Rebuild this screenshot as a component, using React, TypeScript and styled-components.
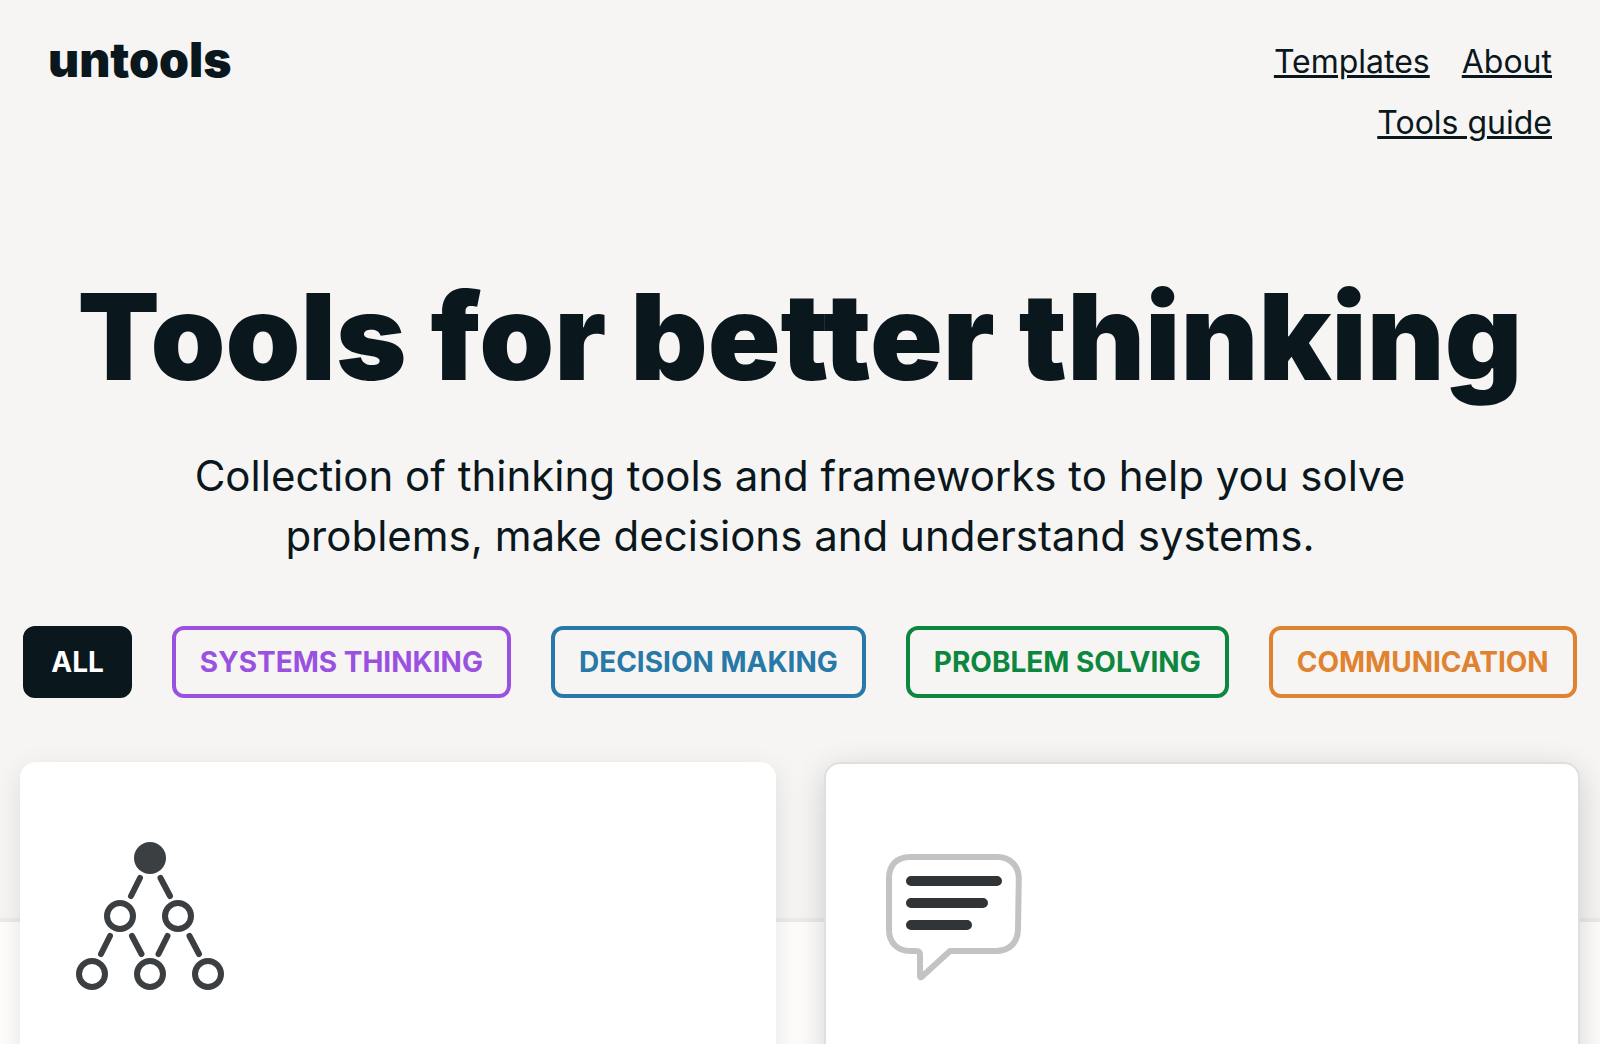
import React, { useState } from "react";
import styled, { createGlobalStyle } from "styled-components";

const ink = "#0a171c";

const GlobalStyle = createGlobalStyle`
  *, *::before, *::after { box-sizing: border-box; }
  body {
    margin: 0;
    background: #fefdfb;
    color: ${ink};
    font-family: Inter, "Liberation Sans", sans-serif;
  }
`;

const Page = styled.div`
  height: 100vh;
  overflow: hidden;
`;

const Hero = styled.div`
  background: #f7f5f3;
  border-bottom: 4px solid #ecebe9;
  padding-bottom: 220px;
`;

const Header = styled.header`
  display: flex;
  justify-content: space-between;
  align-items: flex-start;
  padding: 31px 48px 0;
`;

const Logo = styled.a`
  color: inherit;
  font-size: 48px;
  line-height: 58px;
  font-weight: 900;
  text-decoration: none;
`;

const Nav = styled.nav`
  display: flex;
  flex-wrap: wrap;
  justify-content: flex-end;
  gap: 16px 32px;
  max-width: 400px;
  padding-top: 8px;
`;

const NavLink = styled.a`
  color: inherit;
  font-size: 32px;
  line-height: 45px;
  text-decoration-thickness: 3px;
`;

const Intro = styled.section`
  padding: 120px 48px 0;
  text-align: center;
`;

const Title = styled.h1`
  margin: 0;
  font-size: 120px;
  line-height: 144px;
  font-weight: 900;
  white-space: nowrap;
`;

const Lead = styled.p`
  margin: 37px auto 0;
  max-width: 1280px;
  font-size: 42px;
  line-height: 60px;
`;

const Filters = styled.div`
  display: flex;
  justify-content: center;
  gap: 40px;
  padding-top: 60px;
`;

const FilterButton = styled.button<{ $color: string; $active: boolean }>`
  padding: 12px 24px;
  border: 4px solid ${(p) => p.$color};
  border-radius: 12px;
  background: ${(p) => (p.$active ? p.$color : "transparent")};
  color: ${(p) => (p.$active ? "#fff" : p.$color)};
  font: 700 28px/40px Inter, "Liberation Sans", sans-serif;
  text-transform: uppercase;
  white-space: nowrap;
  cursor: pointer;
`;

const Cards = styled.main`
  position: relative;
  display: grid;
  grid-template-columns: 1fr 1fr;
  gap: 48px;
  margin-top: -160px;
  padding: 0 20px;
`;

const Card = styled.article<{ $outlined?: boolean }>`
  min-height: 480px;
  padding: 78px 54px;
  border: 2px solid ${(p) => (p.$outlined ? "#dfdfdf" : "transparent")};
  border-radius: 16px;
  background: ${(p) => (p.$outlined ? "#fff" : "rgba(255, 255, 255, 0.95)")} border-box;
  box-shadow: 0 8px ${(p) => (p.$outlined ? "32px rgba(0, 0, 0, 0.16)" : "28px rgba(0, 0, 0, 0.1)")};
`;

const Icon = styled.svg`
  display: block;
  width: 148px;
  height: 148px;
  fill: none;
  stroke-width: 6px;
  stroke-linecap: round;
  stroke-linejoin: round;
`;

const TextBars = styled.path`
  stroke: #303437;
  stroke-width: 10px;
`;

const filters = [
  { label: "All", color: ink },
  { label: "Systems thinking", color: "#9b51e0" },
  { label: "Decision making", color: "#2779a7" },
  { label: "Problem solving", color: "#0c873e" },
  { label: "Communication", color: "#e08330" },
];

const PyramidIcon = () => (
  <Icon viewBox="0 0 148 148" stroke="#3c3f42" aria-hidden="true">
    <circle cx="74" cy="16" r="16" fill="#3c3f42" stroke="none" />
    <circle cx="44" cy="74" r="13" />
    <circle cx="102" cy="74" r="13" />
    <circle cx="16" cy="132" r="13" />
    <circle cx="74" cy="132" r="13" />
    <circle cx="132" cy="132" r="13" />
    <path d="M64 36l-9 18M84.500 36l9.500 18M34 94l-9 18M56 94l9.500 18M91.500 94l-9 18M113.500 94l9.500 18" />
  </Icon>
);

const SpeechIcon = () => (
  <Icon viewBox="0 0 148 148" aria-hidden="true">
    <path
      stroke="#c3c3c3"
      d="M30 15H117.500C130 15 139 24 138.800 37L138 87C137.800 101 129 109 116 109H70L41.500 135Q40 136 40 134V113Q40 109 36 109H30C17 109 9 100 9 88V36C9 23 17 15 30 15Z"
    />
    <TextBars d="M31 39H117M31 61H103M31 83H87" />
  </Icon>
);

export default function App() {
  const [active, setActive] = useState("All");
  return (
    <Page>
      <GlobalStyle />
      <Hero>
        <Header>
          <Logo href="#">untools</Logo>
          <Nav>
            <NavLink href="#templates">Templates</NavLink>
            <NavLink href="#about">About</NavLink>
            <NavLink href="#guide">Tools guide</NavLink>
          </Nav>
        </Header>
        <Intro>
          <Title>Tools for better thinking</Title>
          <Lead>
            Collection of thinking tools and frameworks to help you solve problems, make decisions and
            understand systems.
          </Lead>
        </Intro>
        <Filters>
          {filters.map((f) => (
            <FilterButton
              key={f.label}
              type="button"
              $color={f.color}
              $active={active === f.label}
              aria-pressed={active === f.label}
              onClick={() => setActive(f.label)}
            >
              {f.label}
            </FilterButton>
          ))}
        </Filters>
      </Hero>
      <Cards>
        <Card>
          <PyramidIcon />
        </Card>
        <Card $outlined>
          <SpeechIcon />
        </Card>
      </Cards>
    </Page>
  );
}
